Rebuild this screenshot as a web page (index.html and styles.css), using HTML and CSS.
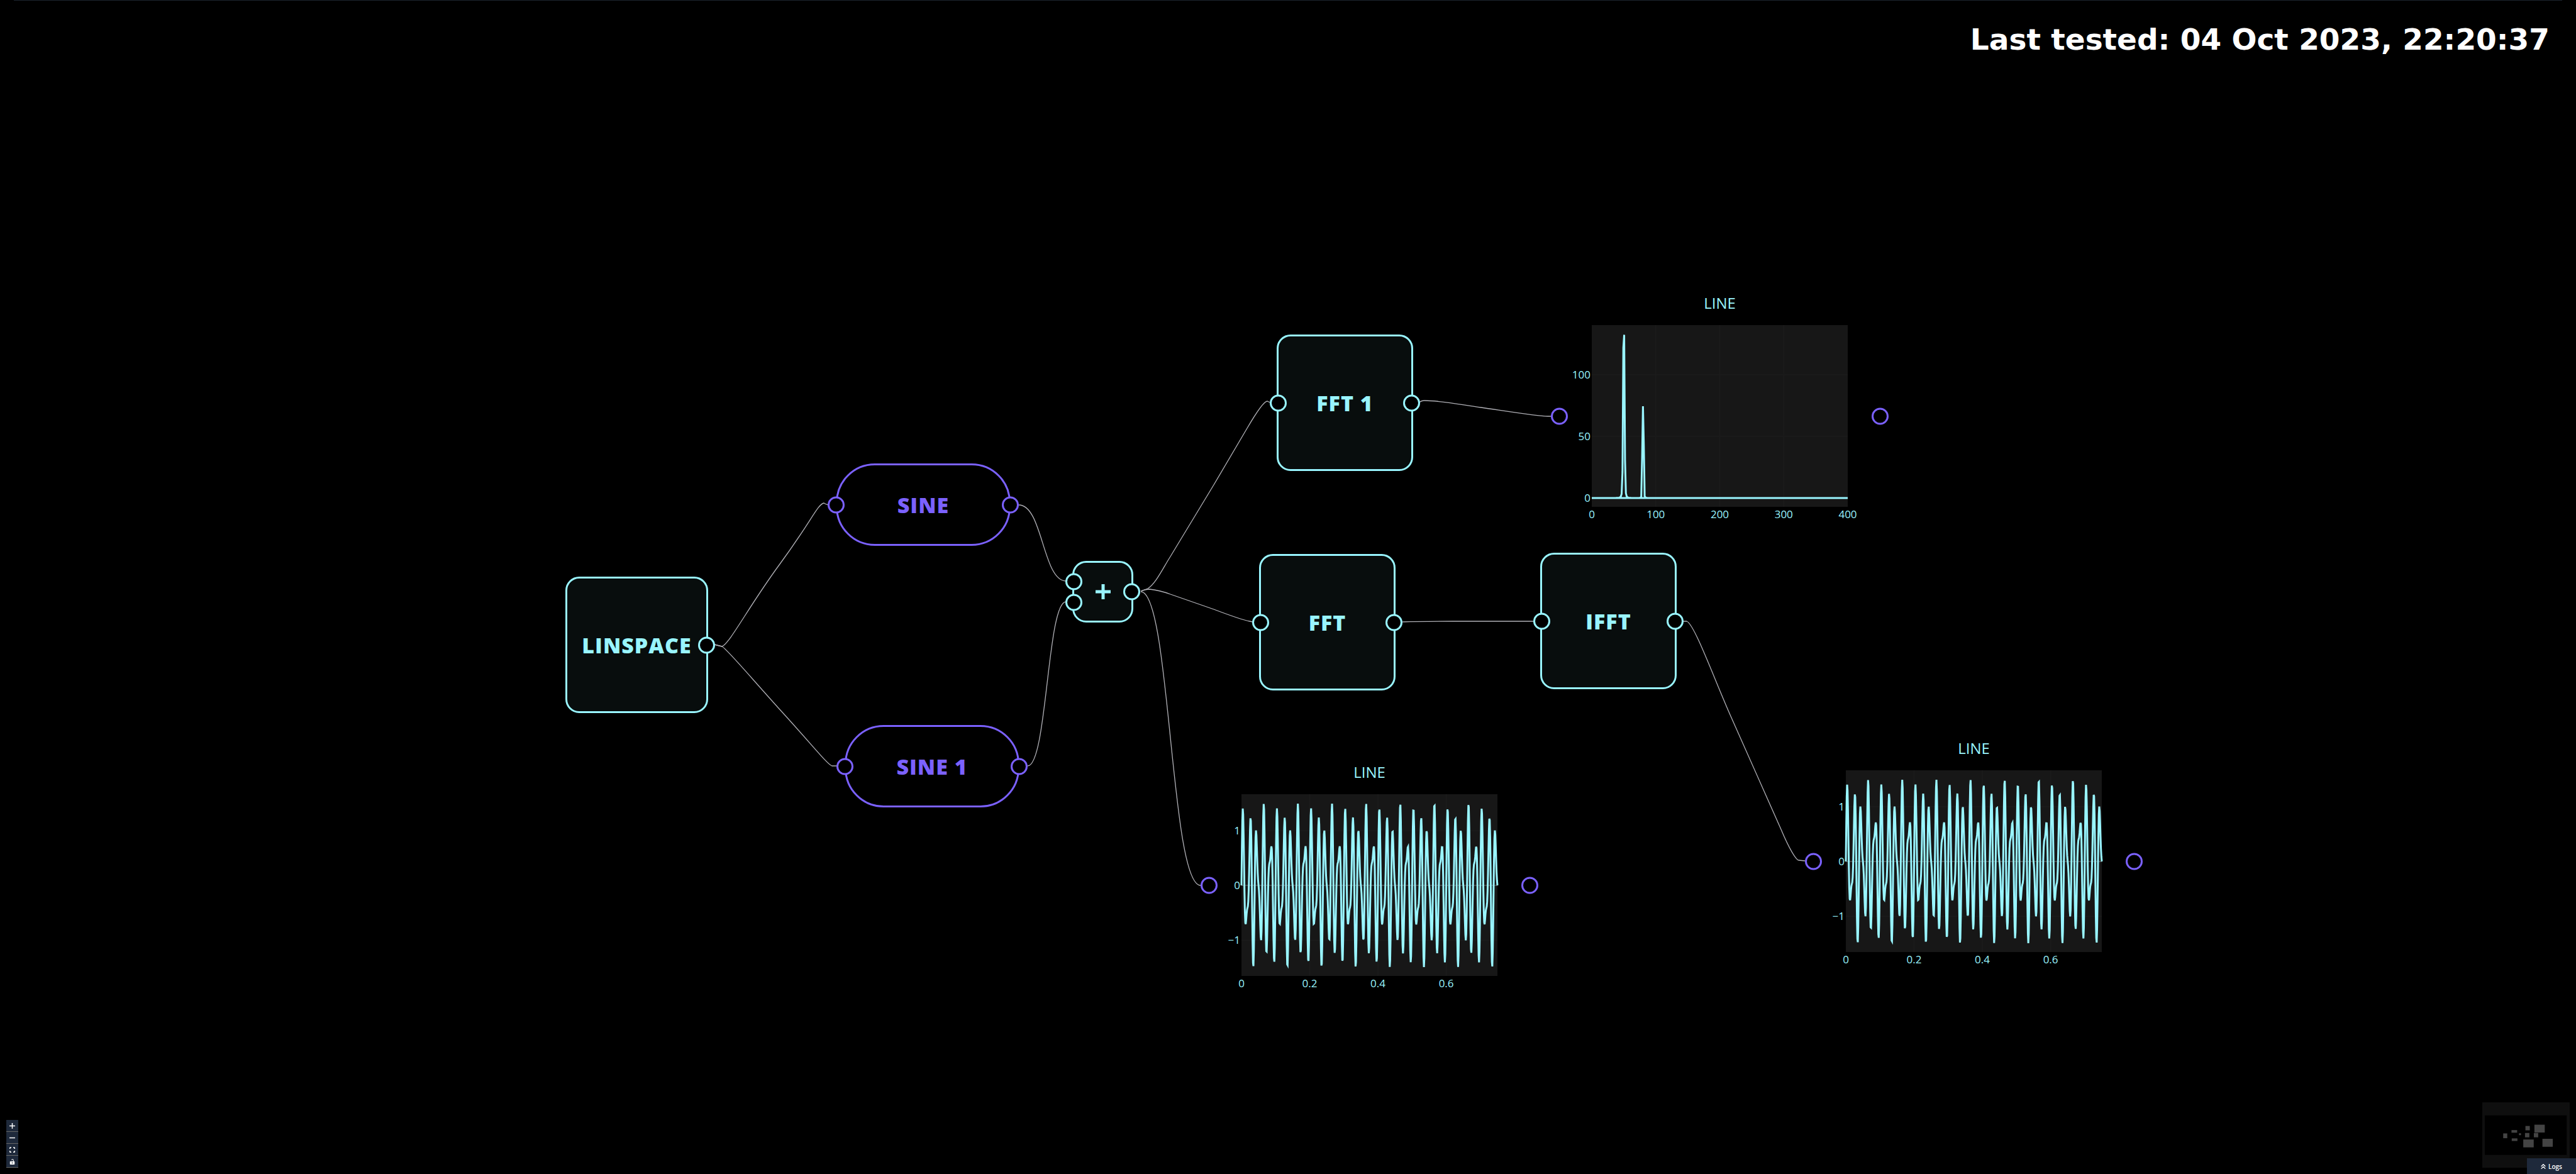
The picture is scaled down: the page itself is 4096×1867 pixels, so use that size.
FILE: index.html
```html
<!DOCTYPE html>
<html lang="en">
<head>
<meta charset="utf-8">
<title>Flow</title>
<link rel="stylesheet" href="styles.css">
</head>
<body>
<main class="canvas">
  <header class="status"><p class="status-text">Last tested: 04 Oct 2023, 22:20:37</p></header>

  <svg class="edges" aria-hidden="true" stroke-width="1.300">
    <path d="M1136 1025 L1148 1028 C1160 1024 1190 965 1240 897 S1300 802 1310 800 Q1313 802 1317 803"/>
    <path d="M1136 1025 L1148 1028 C1156 1032 1196 1080 1246 1135 S1316 1216 1323 1218 H1331"/>
    <path d="M1620 803 C1658 803 1658 924 1695 924"/>
    <path d="M1634 1218 C1665 1218 1665 957 1695 957"/>
    <path d="M1814 940 Q1820 938 1825 936 C1838 928 1850 902 1861 885 L1930 771 L1983 681 C2000 652 2010 638 2015 638 L2019 640"/>
    <path d="M1814 940 Q1822 937 1828 937 Q1845 939 1861 945 L1930 969 Q1975 986 1987 988 L1992 989"/>
    <path d="M1814 941 C1861 941 1861 1408 1909 1408"/>
    <path d="M2257 640 Q2260 637 2265 637 C2290 637 2320 643 2355 648 S2445 662 2461 662 L2466 662"/>
    <path d="M2230 989 Q2260 988 2310 988 H2420 L2439 988"/>
    <path d="M2676 988 H2682 C2694 992 2725 1078 2752 1139 L2832 1319 C2845 1350 2856 1368 2860 1368 L2870 1369"/>
  </svg>

  <section class="node box linspace"><h2 class="label">LINSPACE</h2><i class="port out"></i></section>
  <section class="node pill sine"><i class="port in"></i><h2 class="label">SINE</h2><i class="port out"></i></section>
  <section class="node pill sine-1"><i class="port in"></i><h2 class="label">SINE 1</h2><i class="port out"></i></section>
  <section class="node box add" aria-label="Add">
    <i class="port in upper"></i><i class="port in lower"></i>
    <svg class="plus" viewBox="0 0 24 24"><path d="M12 0V24M0 12H24"/></svg>
    <i class="port out"></i>
  </section>
  <section class="node box fft-1"><i class="port in"></i><h2 class="label">FFT 1</h2><i class="port out"></i></section>
  <section class="node box fft"><i class="port in"></i><h2 class="label">FFT</h2><i class="port out"></i></section>
  <section class="node box ifft"><i class="port in"></i><h2 class="label">IFFT</h2><i class="port out"></i></section>

  <section class="chart spectrum-chart"><i class="port in"></i><h2 class="chart-title">LINE</h2><svg class="plot" data-kind="spectrum"></svg><i class="port out"></i></section>
  <section class="chart input-chart"><i class="port in"></i><h2 class="chart-title">LINE</h2><svg class="plot" data-kind="signal"></svg><i class="port out"></i></section>
  <section class="chart output-chart"><i class="port in"></i><h2 class="chart-title">LINE</h2><svg class="plot" data-kind="signal"></svg><i class="port out"></i></section>

  <nav class="controls" aria-label="Canvas controls">
    <button type="button" aria-label="Zoom in"><svg viewBox="0 0 12 12"><path d="M6 0V12M0 6H12"/></svg></button>
    <button type="button" aria-label="Zoom out"><svg viewBox="0 0 12 12"><path d="M0 6H12"/></svg></button>
    <button type="button" aria-label="Fit view"><svg viewBox="0 0 12 12"><path d="M1 4V2Q1 1 2 1H4M8 1H10Q11 1 11 2V4M11 8V10Q11 11 10 11H8M4 11H2Q1 11 1 10V8"/></svg></button>
    <button type="button" aria-label="Lock canvas"><svg viewBox="0 0 12 12"><path class="solid" fill-rule="evenodd" d="M2 5H8V3.500Q8 1.500 6.500 1.500Q5.500 1.500 5 2.500L4 2Q5 .2 6.500 .2Q9.200 .2 9.200 3.500V5H10Q11 5 11 6V11Q11 12 10 12H2Q1 12 1 11V6Q1 5 2 5ZM6 7.300A1.200 1.200 0 1 0 6 9.700A1.200 1.200 0 1 0 6 7.300Z"/></svg></button>
  </nav>

  <svg class="minimap" viewBox="0 0 200 150" role="img" aria-label="Minimap">
    <rect class="view" x="5.700" y="30" width="187.700" height="90.700"/>
    <rect x="47.700" y="71.300" width="9.300" height="11"/>
    <rect x="66.700" y="63.700" width="13" height="6"/>
    <rect x="67.300" y="82.700" width="13" height="6"/>
    <rect x="84" y="71" width="4.500" height="4.300"/>
    <rect x="98.700" y="54.300" width="10" height="10"/>
    <rect x="97.700" y="70.300" width="10" height="10"/>
    <rect x="118" y="70.300" width="10" height="10"/>
    <rect x="119.300" y="51.300" width="23.700" height="18"/>
    <rect x="93.700" y="85.300" width="24" height="18"/>
    <rect x="137.700" y="83.700" width="23.700" height="18.300"/>
  </svg>
  <button type="button" class="logs"><svg viewBox="0 0 12 12"><path d="M1 6L6 1L11 6M1 11.500L6 6.500L11 11.500"/></svg>Logs</button>
</main>
<script src="plots.js"></script>
</body>
</html>
```
FILE: styles.css
```css
* { box-sizing: border-box; }
:root {
  --cyan: #99f5ff;
  --purple: #7b61ff;
  --slate: #1e293b;
}
body { margin: 0; background: #000; font-family: "Open Sans", "Noto Sans", sans-serif; }
.canvas { position: relative; min-height: 100vh; overflow: hidden; }

.status { margin: 0 22px; border-top: 1px solid #1c242e; padding: 33px 20px 0 0; text-align: right; }
.status-text { margin: 0; color: #fff; font: bold 47px/58px "DejaVu Sans", sans-serif; }

.edges { position: absolute; inset: 0; width: 100%; height: 100%; fill: none; stroke: #b1b1b7; }

.node {
  position: absolute;
  display: flex;
  align-items: center;
  justify-content: center;
  color: var(--tone);
  border: 3px solid var(--tone);
}
.box { --tone: var(--cyan); width: 217px; height: 217px; border-radius: 22px; background: #080d0d; }
.pill { --tone: var(--purple); width: 278px; height: 131px; border-radius: 62px; }
.label { margin: 0; font-size: 34px; line-height: 40px; font-weight: 800; letter-spacing: 1px; }

.port {
  position: absolute;
  top: 50%;
  width: 27px;
  height: 27px;
  border: 3px solid var(--tone);
  border-radius: 50%;
  background: #000;
  transform: translateY(-50%);
}
.box .in { left: -14px; }
.box .out { right: -14px; }
.pill .in, .pill .out { margin: 0 -16px; }
.pill .in { left: 0; }
.pill .out { right: 0; }
.box .upper { top: 30px; }
.box .lower { top: 63px; }

.linspace { left: 899px; top: 917px; width: 227px; }
.sine { left: 1329px; top: 737px; }
.sine-1 { left: 1343px; top: 1153px; }
.add { left: 1705px; top: 892px; width: 97px; height: 98px; }
.fft-1 { left: 2030px; top: 532px; }
.fft { left: 2002px; top: 881px; }
.ifft { left: 2449px; top: 879px; }
.plus { width: 24px; height: 24px; stroke: var(--cyan); stroke-width: 5; }

.chart { --tone: var(--purple); position: absolute; width: 537px; height: 362px; text-align: center; }
.chart-title { margin: 0 0 18px; color: var(--cyan); font-size: 24px; line-height: 34px; font-weight: 400; }
.chart .port { top: 197px; }
.chart .in { left: 0; }
.chart .out { right: 0; }
.spectrum-chart { left: 2466px; top: 465px; }
.input-chart { left: 1909px; top: 1211px; }
.output-chart { left: 2870px; top: 1173px; }
.plot { display: block; width: 407px; height: 289px; margin: 0 65px; overflow: visible; }
.plot .area { fill: #171717; }
.plot .grid { stroke: #1b1b1b; stroke-width: 2; }
.plot .zero { stroke: #444; stroke-width: 2; }
.plot .trace { fill: none; stroke: var(--cyan); stroke-width: 3; }
.plot text { fill: var(--cyan); font-size: 17px; }
.plot .tick-x { text-anchor: middle; }
.plot .tick-y { text-anchor: end; }

.controls { position: absolute; left: 10px; bottom: 10px; display: grid; }
.controls button {
  display: grid;
  place-items: center;
  width: 19px;
  height: 19px;
  padding: 0;
  border: 0;
  border-bottom: 1px solid #666;
  background: var(--slate);
}
.controls svg { width: 9px; height: 9px; fill: none; stroke: #fff; stroke-width: 2; }
.controls .solid { fill: #fff; stroke: none; }

.minimap { position: absolute; right: 10px; bottom: 10px; width: 139px; height: 104px; background: #0f0f0f; fill: #444; }
.minimap .view { fill: #000; }

.logs {
  position: absolute;
  right: 0;
  bottom: 0;
  display: flex;
  align-items: center;
  justify-content: center;
  gap: 4px;
  width: 78px;
  height: 25px;
  padding: 0;
  border: 0;
  color: #fff;
  background: var(--slate);
  font: 600 10px/14px "Open Sans", sans-serif;
}
.logs svg { width: 8px; height: 8px; fill: none; stroke: #fff; stroke-width: 2; }
```
FILE: plots.js
```js
const WIDTH = 407;
const HEIGHT = 289;
const SAMPLES = 600;
const DURATION = 0.75;

const times = Array.from({ length: SAMPLES }, (_, i) => (i * DURATION) / (SAMPLES - 1));
const signal = times.map((t) => Math.sin(100 * Math.PI * t) + 0.5 * Math.sin(160 * Math.PI * t));

// Magnitude of the Hann-windowed transform, positive frequencies only.
function spectrum() {
  const out = [];
  for (let k = 0; k < SAMPLES / 2; k++) {
    let re = 0;
    let im = 0;
    signal.forEach((v, n) => {
      const w = 0.5 - 0.5 * Math.cos((2 * Math.PI * n) / (SAMPLES - 1));
      const a = (2 * Math.PI * k * n) / SAMPLES;
      re += v * w * Math.cos(a);
      im -= v * w * Math.sin(a);
    });
    out.push([k / DURATION, Math.hypot(re, im)]);
  }
  out.push([400, 0], [0, 0]);
  return out;
}

const kinds = {
  signal: {
    points: times.map((t, i) => [t, signal[i]]),
    maxX: 0.75, zeroY: 145, unitY: 87.3,
    xTicks: [0, 0.2, 0.4, 0.6], yTicks: [1, 0, -1],
  },
  spectrum: {
    points: spectrum(),
    maxX: 400, zeroY: 275, unitY: 1.963,
    xTicks: [0, 100, 200, 300, 400], yTicks: [100, 50, 0],
  },
};

document.querySelectorAll(".plot").forEach((svg) => {
  const kind = kinds[svg.dataset.kind];
  const px = (x) => (x / kind.maxX) * WIDTH;
  const py = (y) => kind.zeroY - y * kind.unitY;
  const line = (cls, x1, y1, x2, y2) => `<path class="${cls}" d="M${x1} ${y1}L${x2} ${y2}"/>`;
  let html = `<rect class="area" width="${WIDTH}" height="${HEIGHT}"/>`;
  kind.xTicks.forEach((x) => {
    if (x && x < kind.maxX) html += line("grid", px(x), 0, px(x), HEIGHT);
    html += `<text class="tick-x" x="${px(x)}" y="${HEIGHT + 18}">${x}</text>`;
  });
  kind.yTicks.forEach((y) => {
    html += line(y ? "grid" : "zero", 0, py(y), WIDTH, py(y));
    html += `<text class="tick-y" x="-2" y="${py(y) + 6}">${String(y).replace("-", "\u2212")}</text>`;
  });
  const d = kind.points.map(([x, y]) => `${px(x).toFixed(2)} ${py(y).toFixed(2)}`).join("L");
  svg.innerHTML = html + `<path class="trace" d="M${d}"/>`;
});
```
